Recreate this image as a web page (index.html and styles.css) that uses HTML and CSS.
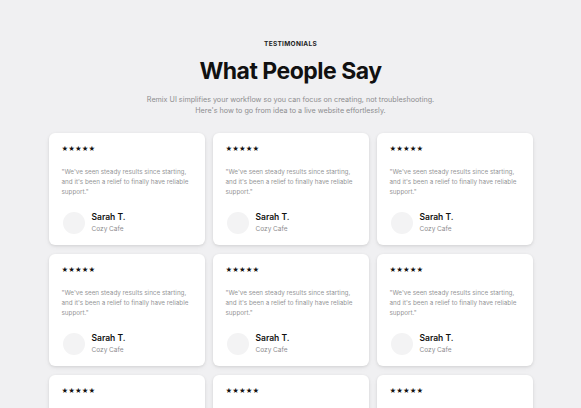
FILE: index.html
```html
<!DOCTYPE html>
<html lang="en">
<head>
<meta charset="utf-8">
<title>Testimonials</title>
<link rel="stylesheet" href="styles.css">
</head>
<body>
<section class="testimonials">
  <p class="eyebrow">TESTIMONIALS</p>
  <h1 class="title">What People Say</h1>
  <p class="lead">Remix UI simplifies your workflow so you can focus on creating, not troubleshooting.<br>Here's how to go from idea to a live website effortlessly.</p>
  <div class="grid">
    <article class="card"><div class="stars">★★★★★</div><p class="quote">"We've seen steady results since starting, and it's been a relief to finally have reliable support."</p><div class="author"><div class="avatar"></div><div><div class="name">Sarah T.</div><div class="company">Cozy Cafe</div></div></div></article>
    <article class="card"><div class="stars">★★★★★</div><p class="quote">"We've seen steady results since starting, and it's been a relief to finally have reliable support."</p><div class="author"><div class="avatar"></div><div><div class="name">Sarah T.</div><div class="company">Cozy Cafe</div></div></div></article>
    <article class="card"><div class="stars">★★★★★</div><p class="quote">"We've seen steady results since starting, and it's been a relief to finally have reliable support."</p><div class="author"><div class="avatar"></div><div><div class="name">Sarah T.</div><div class="company">Cozy Cafe</div></div></div></article>
    <article class="card"><div class="stars">★★★★★</div><p class="quote">"We've seen steady results since starting, and it's been a relief to finally have reliable support."</p><div class="author"><div class="avatar"></div><div><div class="name">Sarah T.</div><div class="company">Cozy Cafe</div></div></div></article>
    <article class="card"><div class="stars">★★★★★</div><p class="quote">"We've seen steady results since starting, and it's been a relief to finally have reliable support."</p><div class="author"><div class="avatar"></div><div><div class="name">Sarah T.</div><div class="company">Cozy Cafe</div></div></div></article>
    <article class="card"><div class="stars">★★★★★</div><p class="quote">"We've seen steady results since starting, and it's been a relief to finally have reliable support."</p><div class="author"><div class="avatar"></div><div><div class="name">Sarah T.</div><div class="company">Cozy Cafe</div></div></div></article>
    <article class="card"><div class="stars">★★★★★</div><p class="quote">"We've seen steady results since starting, and it's been a relief to finally have reliable support."</p><div class="author"><div class="avatar"></div><div><div class="name">Sarah T.</div><div class="company">Cozy Cafe</div></div></div></article>
    <article class="card"><div class="stars">★★★★★</div><p class="quote">"We've seen steady results since starting, and it's been a relief to finally have reliable support."</p><div class="author"><div class="avatar"></div><div><div class="name">Sarah T.</div><div class="company">Cozy Cafe</div></div></div></article>
    <article class="card"><div class="stars">★★★★★</div><p class="quote">"We've seen steady results since starting, and it's been a relief to finally have reliable support."</p><div class="author"><div class="avatar"></div><div><div class="name">Sarah T.</div><div class="company">Cozy Cafe</div></div></div></article>
  </div>
</section>
</body>
</html>
```

FILE: styles.css
```css
html, body {
  margin: 0;
  padding: 0;
  background: #f0f0f2;
  font-family: Inter, "Liberation Sans", sans-serif;
  color: #111;
  overflow: hidden;
}
.testimonials {
  display: flex;
  flex-direction: column;
  align-items: center;
  padding-top: 40px;
}
.eyebrow {
  margin: 0;
  font-size: 6.5px;
  font-weight: 700;
  letter-spacing: 0.3px;
  line-height: 8px;
  color: #222;
}
.title {
  margin: 9px 0 0;
  font-size: 23px;
  font-weight: 700;
  letter-spacing: -0.5px;
  line-height: 28px;
  color: #111;
}
.lead {
  margin: 8.5px 0 0;
  font-size: 7.2px;
  line-height: 11px;
  color: #8d8d8f;
  text-align: center;
}
.grid {
  margin-top: 17.5px;
  display: grid;
  grid-template-columns: repeat(3, 156px);
  gap: 9px 8px;
}
.card {
  background: #fff;
  border-radius: 6px;
  box-shadow: 0 1px 3px rgba(0,0,0,0.10), 0 2px 6px rgba(0,0,0,0.04);
  padding: 12px 12px 13px 13px;
  height: 112px;
  box-sizing: border-box;
}
.stars {
  font-size: 6.4px;
  line-height: 9px;
  letter-spacing: 0.1px;
  color: #111;
}
.quote {
  margin: 13px 0 0;
  font-size: 6.3px;
  line-height: 10px;
  color: #959597;
}
.author {
  margin-top: 15px;
  display: flex;
  align-items: center;
  gap: 7px;
}
.avatar {
  width: 22px;
  height: 22px;
  border-radius: 50%;
  background: #f3f3f4;
  margin-left: 1px;
}
.name {
  font-size: 8.5px;
  font-weight: 600;
  line-height: 11px;
  color: #111;
}
.company {
  margin-top: 2px;
  font-size: 6.5px;
  line-height: 9px;
  color: #8d8d8f;
}
```
